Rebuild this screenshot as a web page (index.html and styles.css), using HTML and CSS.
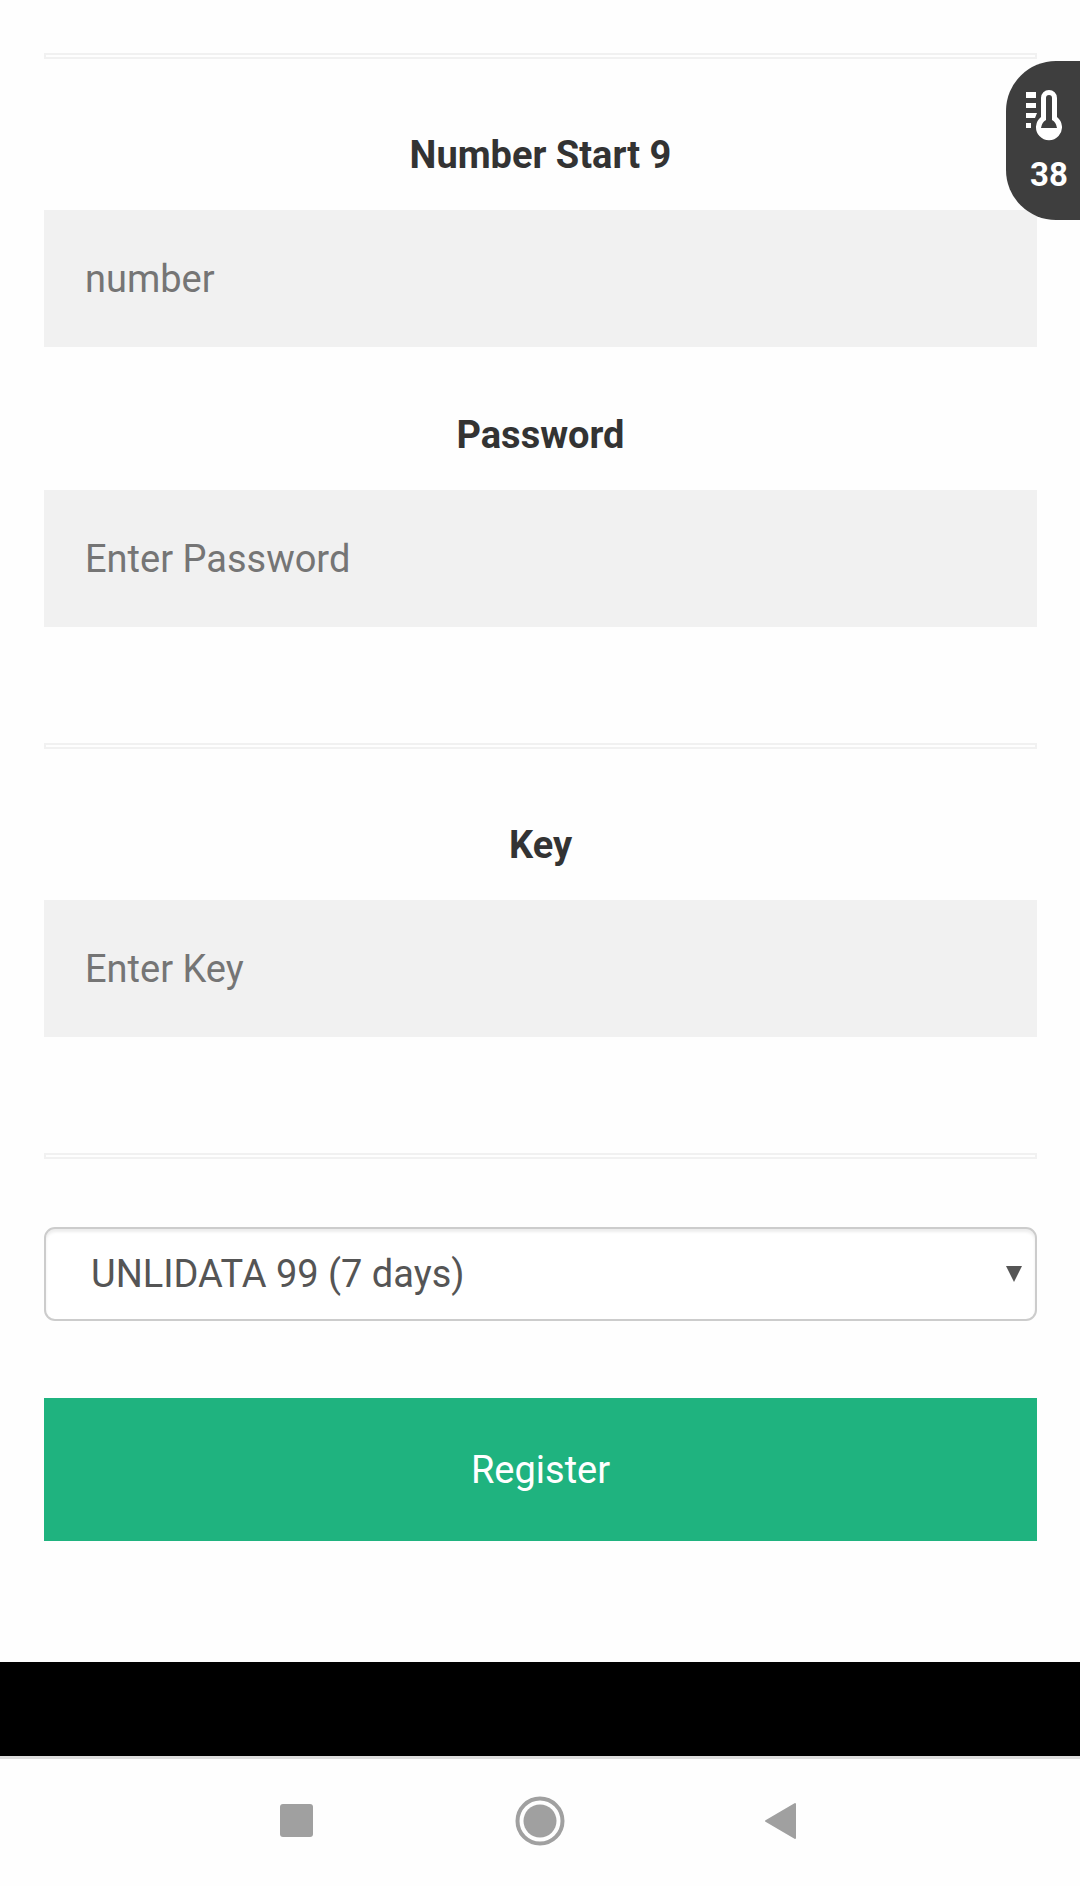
FILE: index.html
```html
<!DOCTYPE html>
<html lang="en">
<head>
    <meta charset="UTF-8">
    <meta name="viewport" content="width=device-width, initial-scale=1.0">
    <title>Register</title>
    <link rel="stylesheet" href="styles.css">
</head>
<body>

    <!-- Temperature badge -->
    <div class="temp-badge">
        <svg class="temp-icon" viewBox="0 0 36 52" aria-hidden="true">
            <path d="M0 2h10v6H0zM0 13h10v5H0zM0 23h11l-2 5H0zM0 33h5v5H0z" fill="#fff"/>
            <path fill-rule="evenodd" d="M15 8a8 8 0 0 1 16 0v19a13 13 0 1 1-16 0zM20 8v22q-4 2-5 8h16q-1-6-5-8V8a3 3 0 0 0-6 0z" fill="#fff"/>
        </svg>
        <span class="temp-value">38</span>
    </div>

    <form class="container">
        <hr>

        <label for="number">Number Start 9</label>
        <input class="text-field" type="text" id="number" name="number" placeholder="number">

        <label for="password">Password</label>
        <input class="text-field" type="password" id="password" name="password" placeholder="Enter Password">

        <hr>

        <label for="key">Key</label>
        <input class="text-field" type="text" id="key" name="key" placeholder="Enter Key">

        <hr>

        <div class="select-box">
            <select id="promo" name="promo" aria-label="Promo">
                <option>UNLIDATA 99 (7 days)</option>
            </select>
            <svg class="select-arrow" viewBox="0 0 16 16" aria-hidden="true">
                <path d="M0 0h16L8 16z" fill="#555"/>
            </svg>
        </div>

        <button type="submit" class="register-btn">Register</button>
    </form>

    <div class="bottom-bar"></div>

    <nav class="nav-bar">
        <button type="button" class="nav-btn" aria-label="Recent apps">
            <svg viewBox="0 0 50 50"><rect x="9" y="8" width="33" height="33" rx="3" fill="#a0a0a0"/></svg>
        </button>
        <button type="button" class="nav-btn" aria-label="Home">
            <svg viewBox="0 0 50 50">
                <circle cx="25" cy="25" r="22.5" fill="none" stroke="#a0a0a0" stroke-width="4"/>
                <circle cx="25" cy="25" r="16.5" fill="#a0a0a0"/>
            </svg>
        </button>
        <button type="button" class="nav-btn" aria-label="Back">
            <svg viewBox="0 0 50 50"><path d="M7 25L36 8v34z" fill="#a0a0a0" stroke="#a0a0a0" stroke-width="2" stroke-linejoin="round"/></svg>
        </button>
    </nav>

</body>
</html>
```
FILE: styles.css
```css
:root {
    --primary-color: #1fb37f;
    --field-color: #f1f1f1;
    --badge-color: #3e3e3e;
    --text-color: #333;
}

* {
    box-sizing: border-box;
    margin: 0;
    padding: 0;
    font-family: Roboto, sans-serif;
}

body {
    background-color: #fefefe;
    color: var(--text-color);
    font-size: 38px;
    line-height: 56px;
}

/* Form */
.container {
    display: flex;
    flex-direction: column;
    padding: 53px 43px 121px 44px;
}

hr {
    height: 6px;
    border: 2px solid var(--field-color);
    margin-bottom: 68px;
}

label {
    font-weight: bold;
    text-align: center;
    margin-bottom: 27px;
}

.text-field {
    width: 100%;
    height: 137px;
    padding: 0 41px;
    border: none;
    background-color: var(--field-color);
    font-size: 38px;
}

.text-field::placeholder {
    color: #757575;
}

.text-field + label {
    margin-top: 60px;
}

.text-field + hr {
    margin-top: 116px;
}

/* Drop-down */
.select-box {
    position: relative;
    margin-bottom: 77px;
}

select {
    display: block;
    width: 100%;
    height: 94px;
    padding: 0 45px;
    border: 2px solid #ccc;
    border-radius: 11px;
    background-color: #fff;
    box-shadow: inset 0 3px 3px rgba(0,0,0,0.075);
    color: #555;
    font-size: 38px;
    appearance: none;
}

.select-arrow {
    position: absolute;
    top: 39px;
    right: 15px;
    width: 16px;
    height: 16px;
    pointer-events: none;
}

.register-btn {
    height: 143px;
    border: none;
    background-color: var(--primary-color);
    color: white;
    font-size: 38px;
    cursor: pointer;
}

/* Floating badge on the right edge */
.temp-badge {
    position: absolute;
    top: 61px;
    right: 0;
    width: 74px;
    height: 159px;
    padding: 29px 0 0 20px;
    border-radius: 50px 0 0 50px;
    background-color: var(--badge-color);
    color: white;
}

.temp-icon {
    display: block;
    width: 36px;
    height: 52px;
}

.temp-value {
    display: block;
    padding-left: 4px;
    margin-top: 6px;
    font-size: 33px;
    font-weight: bold;
    line-height: 54px;
}

/* Bottom of the screen */
.bottom-bar {
    height: 94px;
    background-color: #000;
}

.nav-bar {
    display: flex;
    justify-content: center;
    height: 130px;
    padding-bottom: 3px;
    border-top: 3px solid #ddd;
}

.nav-btn {
    display: flex;
    align-items: center;
    justify-content: center;
    width: 244px;
    border: none;
    background: none;
    cursor: pointer;
}

.nav-btn svg {
    width: 50px;
    height: 50px;
}
```
